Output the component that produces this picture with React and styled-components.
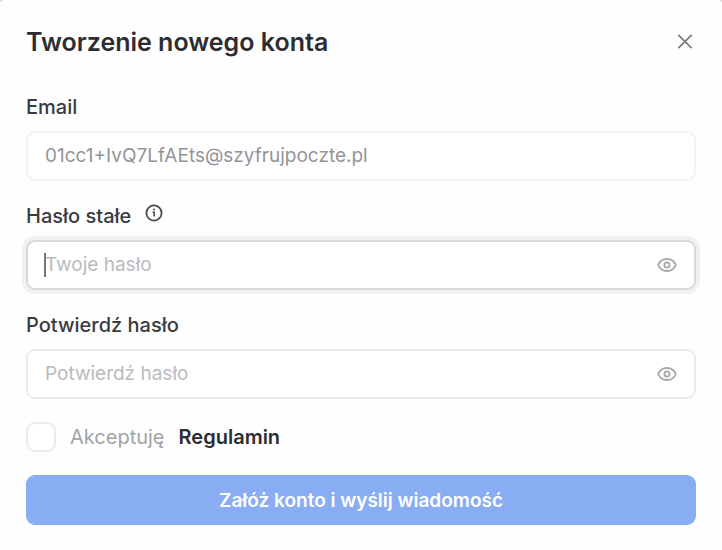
import React, { useState } from "react";
import styled, { createGlobalStyle, css } from "styled-components";

const GlobalStyle = createGlobalStyle`
  * {
    box-sizing: border-box;
  }
  body {
    margin: 0;
    background-color: #d4d4d6;
    font-family: Inter, "Liberation Sans", sans-serif;
    font-size: 20px;
    color: #3a3b3f;
  }
`;

const Dialog = styled.main`
  min-height: 100vh;
  padding: 26px 26px 24px;
  background-color: #fefefe;
  border-radius: 4px 4px 0 0;
`;

const Header = styled.header`
  display: flex;
  align-items: center;
  justify-content: space-between;
  margin-bottom: 37px;
`;

const Title = styled.h1`
  margin: 0;
  font-size: 25px;
  line-height: 32px;
  font-weight: 600;
  color: #2c2d31;
`;

const IconButton = styled.button`
  display: flex;
  padding: 0;
  border: none;
  background: none;
  color: ${(props) => props.$color};
  cursor: pointer;
`;

const Form = styled.form`
  display: flex;
  flex-direction: column;
  gap: 23px;
`;

const Field = styled.div`
  display: flex;
  flex-direction: column;
  gap: 12px;
`;

const LabelRow = styled.div`
  display: flex;
  align-items: flex-start;
  gap: 14px;
  line-height: 24px;
`;

const Label = styled.label`
  font-weight: 500;
`;

const InputBox = styled.div`
  display: flex;
  align-items: center;
  position: relative;
  height: 50px;
  padding: 0 17px;
  border: 2px solid ${(props) => (props.$disabled ? "#f3f3f4" : "#ebebec")};
  border-radius: 9px;
  background-color: #fff;

  ${(props) =>
    props.$active &&
    css`
      border-color: #d9d9dc;
      box-shadow: 0 0 0 4px #f1f1f2;
    `}
`;

const Input = styled.input`
  flex: 1;
  min-width: 0;
  padding: 0;
  border: none;
  outline: none;
  background: none;
  font: inherit;
  font-size: 19px;
  line-height: 24px;
  color: #3a3b3f;
  caret-color: transparent;

  &::placeholder {
    color: #b9babe;
    opacity: 1;
  }

  &:disabled {
    color: #939498;
  }
`;

const Caret = styled.span`
  position: absolute;
  left: 16px;
  width: 2px;
  height: 24px;
  background-color: #77787c;
`;

const Terms = styled.div`
  display: flex;
  align-items: center;
  gap: 14px;
  line-height: 24px;
`;

const Checkbox = styled.input`
  appearance: none;
  width: 30px;
  height: 30px;
  margin: 0;
  border: 2px solid #ebebec;
  border-radius: 9px;
  background-color: #fff;

  &:checked {
    background-color: #88adf2;
  }
`;

const TermsLabel = styled.label`
  color: #a2a3a7;
`;

const TermsLink = styled.a`
  color: #2c2d31;
  font-weight: 600;
  text-decoration: none;
`;

const Submit = styled.button`
  height: 50px;
  border: none;
  border-radius: 9px;
  background-color: #88adf2;
  color: #fff;
  font: inherit;
  font-size: 19px;
  font-weight: 600;
  cursor: pointer;
`;

const CloseIcon = () => (
  <svg width="22" height="22" viewBox="0 0 22 22" fill="none" stroke="currentColor" strokeWidth="1.8">
    <path d="M4.3 3.8l13.4 13.4M17.7 3.8L4.3 17.2" />
  </svg>
);

const InfoIcon = () => (
  <svg width="18" height="18" viewBox="0 0 18 18" fill="none" stroke="currentColor">
    <circle cx="9" cy="9" r="7.6" strokeWidth="1.8" />
    <path d="M7.6 8.2h1.6v4.4" strokeWidth="1.6" />
    <circle cx="9" cy="5.6" r="1" fill="currentColor" stroke="none" />
  </svg>
);

const EyeIcon = () => (
  <svg width="20" height="20" viewBox="0 0 20 20" fill="none" stroke="currentColor" strokeWidth="1.8">
    <path d="M1.2 10C2.8 6 6.2 4 10 4s7.2 2 8.8 6c-1.6 4-5 6-8.8 6S2.8 14 1.2 10z" />
    <circle cx="10" cy="10" r="2.6" />
  </svg>
);

const PasswordField = ({ id, label, placeholder, info, active }) => {
  const [value, setValue] = useState("");
  const [visible, setVisible] = useState(false);

  return (
    <Field>
      <LabelRow>
        <Label htmlFor={id}>{label}</Label>
        {info && (
          <IconButton type="button" aria-label="Informacja" $color="#4a4b4f">
            <InfoIcon />
          </IconButton>
        )}
      </LabelRow>
      <InputBox $active={active}>
        {active && !value && <Caret />}
        <Input
          id={id}
          type={visible ? "text" : "password"}
          placeholder={placeholder}
          value={value}
          onChange={(e) => setValue(e.target.value)}
        />
        <IconButton
          type="button"
          aria-label="Pokaż hasło"
          $color="#a6a7ab"
          onClick={() => setVisible(!visible)}
        >
          <EyeIcon />
        </IconButton>
      </InputBox>
    </Field>
  );
};

const App = () => {
  return (
    <>
      <GlobalStyle />
      <Dialog>
        <Header>
          <Title>Tworzenie nowego konta</Title>
          <IconButton type="button" aria-label="Zamknij" $color="#7c7d81">
            <CloseIcon />
          </IconButton>
        </Header>

        <Form onSubmit={(e) => e.preventDefault()}>
          <Field>
            <LabelRow>
              <Label htmlFor="email">Email</Label>
            </LabelRow>
            <InputBox $disabled>
              <Input id="email" type="email" defaultValue="01cc1+IvQ7LfAEts@szyfrujpoczte.pl" disabled />
            </InputBox>
          </Field>

          <PasswordField id="password" label="Hasło stałe" placeholder="Twoje hasło" info active />
          <PasswordField id="confirm" label="Potwierdź hasło" placeholder="Potwierdź hasło" />

          <Terms>
            <Checkbox id="terms" type="checkbox" />
            <TermsLabel htmlFor="terms">Akceptuję</TermsLabel>
            <TermsLink href="#regulamin">Regulamin</TermsLink>
          </Terms>

          <Submit type="submit">Załóż konto i wyślij wiadomość</Submit>
        </Form>
      </Dialog>
    </>
  );
};

export default App;
